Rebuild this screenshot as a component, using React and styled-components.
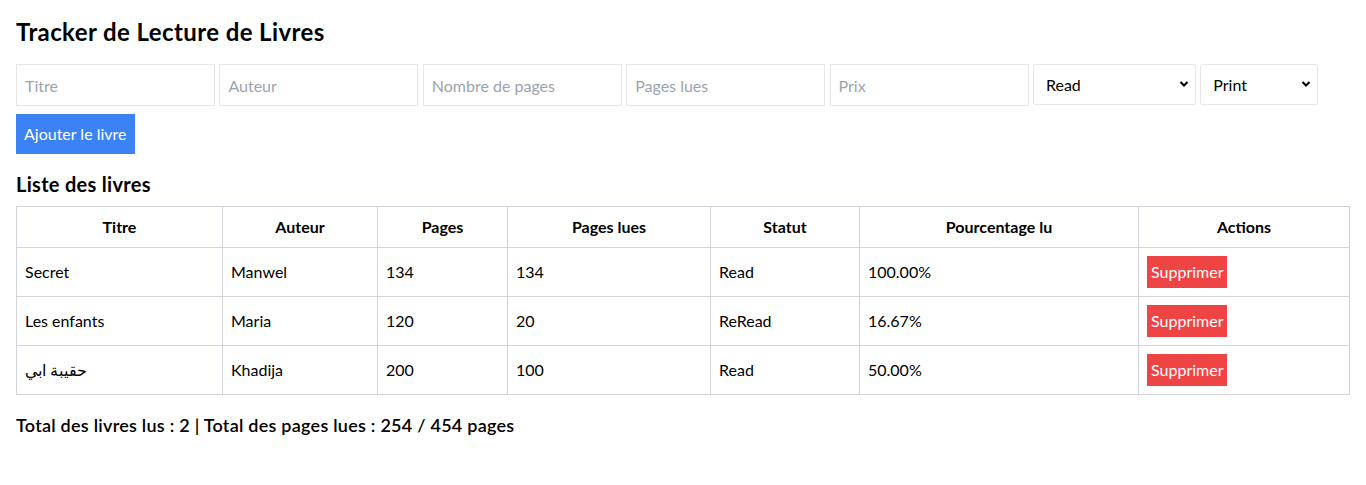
import React from "react";
import styled, { createGlobalStyle } from "styled-components";

const Global = createGlobalStyle`
  html, body { margin: 0; padding: 0; background: #fff; }
  body { font-family: Lato, "Noto Sans", sans-serif; color: #000; font-size: 16px; line-height: 1.5; }
  * { box-sizing: border-box; }
`;

const Page = styled.div`
  padding: 16px;
`;

const Title = styled.h1`
  margin: 0 0 16px;
  font-size: 24px;
  line-height: 32px;
  font-weight: 700;
  letter-spacing: 0.4px;
`;

const Form = styled.div`
  display: flex;
  flex-direction: column;
  align-items: flex-start;
  gap: 8px;
`;

const Fields = styled.div`
  display: flex;
  column-gap: 4.4px;
  align-items: flex-start;
`;

const Input = styled.input`
  width: 199px;
  height: 42px;
  padding: 8px;
  border: 1px solid #e5e7eb;
  font: inherit;
  font-size: 16px;
  color: #000;
  outline: none;
  &::placeholder { color: #9ca3af; }
`;

const SelectWrap = styled.span`
  position: relative;
  display: inline-block;
  width: ${(p) => p.$w}px;
  height: 41px;
`;

const Select = styled.select`
  appearance: none;
  width: 100%;
  height: 100%;
  padding: 0 8px 0 12px;
  border: 1px solid #e5e7eb;
  border-radius: 2px;
  background: #fff;
  font: inherit;
  font-size: 16px;
  color: #000;
  outline: none;
`;

const Chevron = styled.svg`
  position: absolute;
  right: 7px;
  top: 16px;
  width: 10px;
  height: 8px;
  pointer-events: none;
`;

const AddButton = styled.button`
  padding: 8px;
  height: 40px;
  border: none;
  background: #3b82f6;
  color: #fff;
  font: inherit;
  font-size: 16px;
  line-height: 24px;
`;

const SubTitle = styled.h2`
  margin: 16px 0 8px;
  font-size: 20px;
  line-height: 28px;
  font-weight: 700;
  letter-spacing: 0.3px;
`;

const Table = styled.table`
  width: 100%;
  border-collapse: collapse;
  table-layout: fixed;
  border: 1px solid #d1d5db;
`;

const Th = styled.th`
  border: 1px solid #d1d5db;
  padding: 8px;
  font-weight: 700;
  text-align: center;
  line-height: 24px;
`;

const Td = styled.td`
  border: 1px solid #d1d5db;
  padding: 8px;
  height: 49px;
  line-height: 24px;
  vertical-align: middle;
  text-align: left;
`;

const DeleteButton = styled.button`
  display: block;
  height: 32px;
  padding: 4px;
  border: none;
  background: #ef4444;
  color: #fff;
  font: inherit;
  font-size: 16px;
  line-height: 24px;
`;

const Totals = styled.p`
  margin: 16px 0 0;
  font-size: 18px;
  line-height: 28px;
  font-weight: 600;
  letter-spacing: 0.25px;
`;

const cols = [206, 155, 130, 203, 149, 279, 211];
const books = [
  { t: "Secret", a: "Manwel", p: 134, r: 134, s: "Read", pc: "100.00%" },
  { t: "Les enfants", a: "Maria", p: 120, r: 20, s: "ReRead", pc: "16.67%" },
  { t: "حقيبة ابي", a: "Khadija", p: 200, r: 100, s: "Read", pc: "50.00%" },
];

const ChevronIcon = () => (
  <Chevron viewBox="0 0 10 8">
    <path d="M1.5 2 L5 5.5 L8.5 2" fill="none" stroke="#000" strokeWidth="2" />
  </Chevron>
);

export default function App() {
  return (
    <Page>
      <Global />
      <Title>Tracker de Lecture de Livres</Title>
      <Form>
        <Fields>
          <Input placeholder="Titre" />
          <Input placeholder="Auteur" />
          <Input placeholder="Nombre de pages" />
          <Input placeholder="Pages lues" />
          <Input placeholder="Prix" />
          <SelectWrap $w={163}>
            <Select defaultValue="Read">
              <option>Read</option>
              <option>ReRead</option>
            </Select>
            <ChevronIcon />
          </SelectWrap>
          <SelectWrap $w={118}>
            <Select defaultValue="Print">
              <option>Print</option>
              <option>Ebook</option>
            </Select>
            <ChevronIcon />
          </SelectWrap>
        </Fields>
        <AddButton>Ajouter le livre</AddButton>
      </Form>
      <SubTitle>Liste des livres</SubTitle>
      <Table>
        <colgroup>
          {cols.map((w, i) => (
            <col key={i} style={{ width: w }} />
          ))}
        </colgroup>
        <thead>
          <tr>
            <Th>Titre</Th>
            <Th>Auteur</Th>
            <Th>Pages</Th>
            <Th>Pages lues</Th>
            <Th>Statut</Th>
            <Th>Pourcentage lu</Th>
            <Th>Actions</Th>
          </tr>
        </thead>
        <tbody>
          {books.map((b) => (
            <tr key={b.t}>
              <Td>{b.t}</Td>
              <Td>{b.a}</Td>
              <Td>{b.p}</Td>
              <Td>{b.r}</Td>
              <Td>{b.s}</Td>
              <Td>{b.pc}</Td>
              <Td>
                <DeleteButton>Supprimer</DeleteButton>
              </Td>
            </tr>
          ))}
        </tbody>
      </Table>
      <Totals>Total des livres lus : 2 | Total des pages lues : 254 / 454 pages</Totals>
    </Page>
  );
}
